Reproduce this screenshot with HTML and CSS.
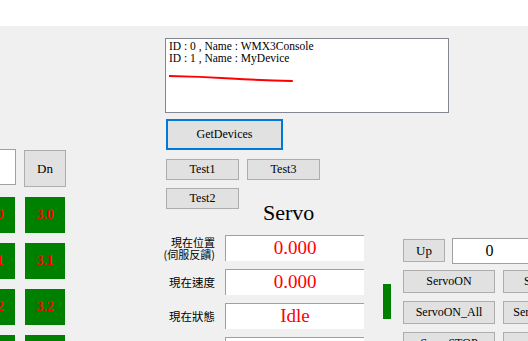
FILE: index.html
```html
<!DOCTYPE html>
<html lang="zh-Hant">
<head>
    <meta charset="UTF-8">
    <title>WMX3 Servo</title>
    <link rel="stylesheet" href="styles.css">
</head>
<body>
    <div class="topbar"></div>
    <div class="form">
        <div class="jog-panel">
            <div class="jog-row">
                <div class="textbox"></div>
                <div class="btn btn-dn">Dn</div>
            </div>
            <div class="tiles">
                <div class="tile">2.0</div><div class="tile">3.0</div>
                <div class="tile">2.1</div><div class="tile">3.1</div>
                <div class="tile">2.2</div><div class="tile">3.2</div>
                <div class="tile">2.3</div><div class="tile">3.3</div>
            </div>
        </div>

        <div class="main">
            <div class="listbox">
                <div class="line">ID : 0 , Name : WMX3Console</div>
                <div class="line">ID : 1 , Name : MyDevice</div>
                <svg class="scribble" width="130" height="14" viewBox="0 0 130 14">
                    <path d="M0 6 Q30 6.5 62 8.5 Q95 10.5 123 11" stroke="#ff0000" stroke-width="2" fill="none" stroke-linecap="round"/>
                </svg>
            </div>

            <div class="lower">
                <div class="servo-col">
                    <div class="btn btn-get">GetDevices</div>
                    <div class="btn-row">
                        <div class="btn btn-test">Test1</div>
                        <div class="btn btn-test">Test3</div>
                    </div>
                    <div class="btn-row row-title">
                        <div class="btn btn-test">Test2</div>
                        <div class="title">Servo</div>
                    </div>
                    <div class="field-row first">
                        <div class="label"><div>現在位置</div><div>(伺服反饋)</div></div>
                        <div class="value">0.000</div>
                    </div>
                    <div class="field-row">
                        <div class="label">現在速度</div>
                        <div class="value">0.000</div>
                    </div>
                    <div class="field-row">
                        <div class="label">現在狀態</div>
                        <div class="value">Idle</div>
                    </div>
                    <div class="field-row">
                        <div class="label">命令位置</div>
                        <div class="value"></div>
                    </div>
                </div>

                <div class="status-bar"></div>

                <div class="cmd-col">
                    <div class="cmd-row">
                        <div class="btn btn-up">Up</div>
                        <div class="numbox">0</div>
                    </div>
                    <div class="cmd-row">
                        <div class="btn btn-cmd">ServoON</div>
                        <div class="btn btn-cmd">ServoOFF</div>
                    </div>
                    <div class="cmd-row">
                        <div class="btn btn-cmd">ServoON_All</div>
                        <div class="btn btn-cmd">ServoOFF_All</div>
                    </div>
                    <div class="cmd-row">
                        <div class="btn btn-cmd">ServoSTOP</div>
                        <div class="btn btn-cmd">SetZero</div>
                    </div>
                </div>
            </div>
        </div>
    </div>
</body>
</html>
```

FILE: styles.css
```css
body {
    margin: 0;
    padding: 0;
    font-family: "Liberation Serif", "Noto Sans CJK TC", serif;
    font-size: 12px;
    color: #000;
    background-color: #fff;
    overflow: hidden;
}

.topbar {
    height: 26px;
    background-color: #fff;
}

.form {
    display: flex;
    align-items: flex-start;
    height: 315px;
    background-color: #f0f0f0;
    overflow: hidden;
}

.btn {
    box-sizing: border-box;
    display: flex;
    align-items: center;
    justify-content: center;
    flex-shrink: 0;
    background-color: #e1e1e1;
    border: 1px solid #adadad;
    white-space: nowrap;
}

/* left jog panel, partly cut off by the window edge */
.jog-panel {
    flex-shrink: 0;
    width: 91px;
    margin-left: -25px;
}

.jog-row {
    display: flex;
    align-items: flex-start;
    margin-top: 123px;
}

.textbox {
    box-sizing: border-box;
    width: 41px;
    height: 36px;
    background-color: #fff;
    border: 1px solid #a0a0a0;
}

.btn-dn {
    width: 42px;
    height: 37px;
    margin-left: 8px;
    margin-top: 1px;
    font-size: 13px;
}

.tiles {
    display: grid;
    grid-template-columns: 40px 40px;
    grid-auto-rows: 36px;
    gap: 10px;
    margin-top: 10px;
}

.tile {
    display: flex;
    align-items: center;
    justify-content: center;
    background-color: #008000;
    color: #ff0000;
    font-weight: bold;
    font-size: 14px;
}

/* main area */
.main {
    flex-shrink: 0;
    width: 368px;
    margin-left: 94px;
}

.listbox {
    box-sizing: border-box;
    width: 284px;
    height: 75px;
    margin-top: 12px;
    margin-left: 5px;
    padding: 1px 3px;
    background-color: #fff;
    border: 1px solid #828790;
}

.line {
    height: 12px;
    line-height: 12px;
    font-size: 11.5px;
    white-space: nowrap;
}

.scribble {
    display: block;
    margin-top: 6px;
}

.lower {
    display: flex;
    align-items: flex-start;
    margin-top: 6px;
}

.servo-col {
    flex-shrink: 0;
    width: 204px;
}

.btn-get {
    width: 117px;
    height: 31px;
    margin-left: 6px;
    border: 2px solid #0078d7;
}

.btn-row {
    display: flex;
    align-items: flex-start;
    gap: 8px;
    margin-top: 9px;
    margin-left: 6px;
}

.row-title {
    margin-top: 8px;
}

.btn-test {
    width: 73px;
    height: 21px;
}

.title {
    margin-top: 14px;
    margin-left: 16px;
    font-size: 22px;
    line-height: 22px;
}

.field-row {
    display: flex;
    align-items: center;
    margin-top: 8px;
}

.field-row.first {
    margin-top: 11px;
}

.label {
    width: 55px;
    margin-right: 10px;
    text-align: right;
    font-family: "Noto Sans CJK TC", sans-serif;
    font-size: 11.5px;
    line-height: 12px;
    white-space: nowrap;
}

.label div {
    height: 12px;
    line-height: 12px;
    font-size: 11px;
}

.value {
    box-sizing: border-box;
    width: 139px;
    height: 26px;
    line-height: 24px;
    text-align: center;
    font-size: 19px;
    color: #ff0000;
    background-color: #fff;
    border-top: 1px solid #a0a0a0;
    border-left: 1px solid #a0a0a0;
}

.status-bar {
    flex-shrink: 0;
    width: 8px;
    height: 35px;
    margin-left: 19px;
    margin-top: 165px;
    background-color: #008000;
}

.cmd-col {
    flex-shrink: 0;
    margin-left: 12px;
    margin-top: 119px;
}

.cmd-row {
    display: flex;
    align-items: flex-start;
    gap: 8px;
    margin-top: 8px;
}

.cmd-row:first-child {
    margin-top: 0;
    gap: 7px;
}

.cmd-row:nth-child(2) {
    margin-top: 6px;
}

.btn-up {
    width: 42px;
    height: 23px;
    margin-top: 1px;
    font-size: 13px;
}

.numbox {
    box-sizing: border-box;
    width: 80px;
    height: 26px;
    padding-right: 5px;
    line-height: 24px;
    text-align: center;
    font-size: 16px;
    background-color: #fff;
    border: 1px solid #a0a0a0;
}

.btn-cmd {
    width: 92px;
    height: 23px;
}
```
